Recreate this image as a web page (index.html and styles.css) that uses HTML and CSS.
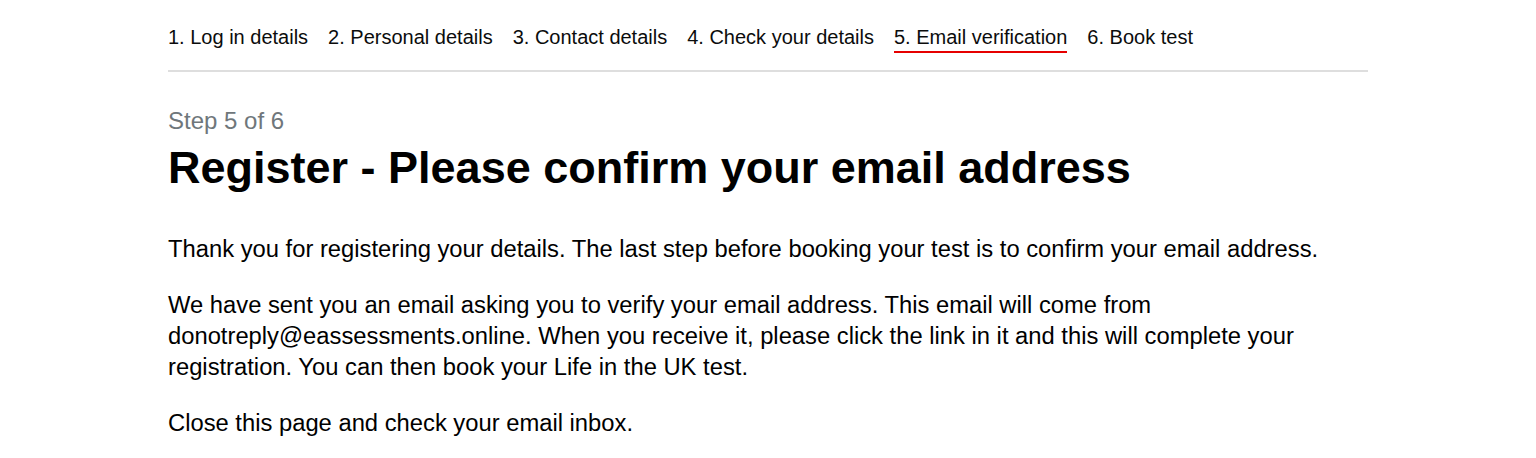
FILE: index.html
```html
<!DOCTYPE html>
<html lang="en">
<head>
<meta charset="utf-8">
<title>Register - Please confirm your email address</title>
<link rel="stylesheet" href="styles.css">
</head>
<body>
<div class="page">
  <nav class="steps">
    <span class="step">1. Log in details</span>
    <span class="step">2. Personal details</span>
    <span class="step">3. Contact details</span>
    <span class="step">4. Check your details</span>
    <span class="step current">5. Email verification</span>
    <span class="step">6. Book test</span>
  </nav>
  <main class="content">
    <p class="caption">Step 5 of 6</p>
    <h1 class="title">Register - Please confirm your email address</h1>
    <p class="text">Thank you for registering your details. The last step before booking your test is to confirm your email address.</p>
    <p class="text">We have sent you an email asking you to verify your email address. This email will come from donotreply@eassessments.online. When you receive it, please click the link in it and this will complete your registration. You can then book your Life in the UK test.</p>
    <p class="text">Close this page and check your email inbox.</p>
  </main>
</div>
</body>
</html>
```
FILE: styles.css
```css
html, body {
  margin: 0;
  padding: 0;
  background: #ffffff;
}
body {
  font-family: "Liberation Sans", Arial, sans-serif;
  color: #0b0c0c;
}
.page {
  width: 1200px;
  margin: 0 auto;
  padding-top: 26px;
}
.steps {
  display: flex;
  gap: 20px;
  font-size: 20px;
  line-height: 23px;
  border-bottom: 2px solid #dedede;
  padding-bottom: 17px;
}
.step {
  padding-bottom: 2px;
  border-bottom: 2px solid transparent;
}
.step.current {
  border-bottom-color: #e60000;
}
.content {
  padding-top: 35px;
}
.caption {
  margin: 0;
  font-size: 24px;
  line-height: 28px;
  color: #6f777b;
}
.title {
  margin: 6px 0 38px;
  font-size: 45px;
  line-height: 54px;
  font-weight: 700;
  color: #000;
}
.text {
  margin: 0 0 25px;
  font-size: 23.78px;
  line-height: 31px;
  color: #000;
}
```
